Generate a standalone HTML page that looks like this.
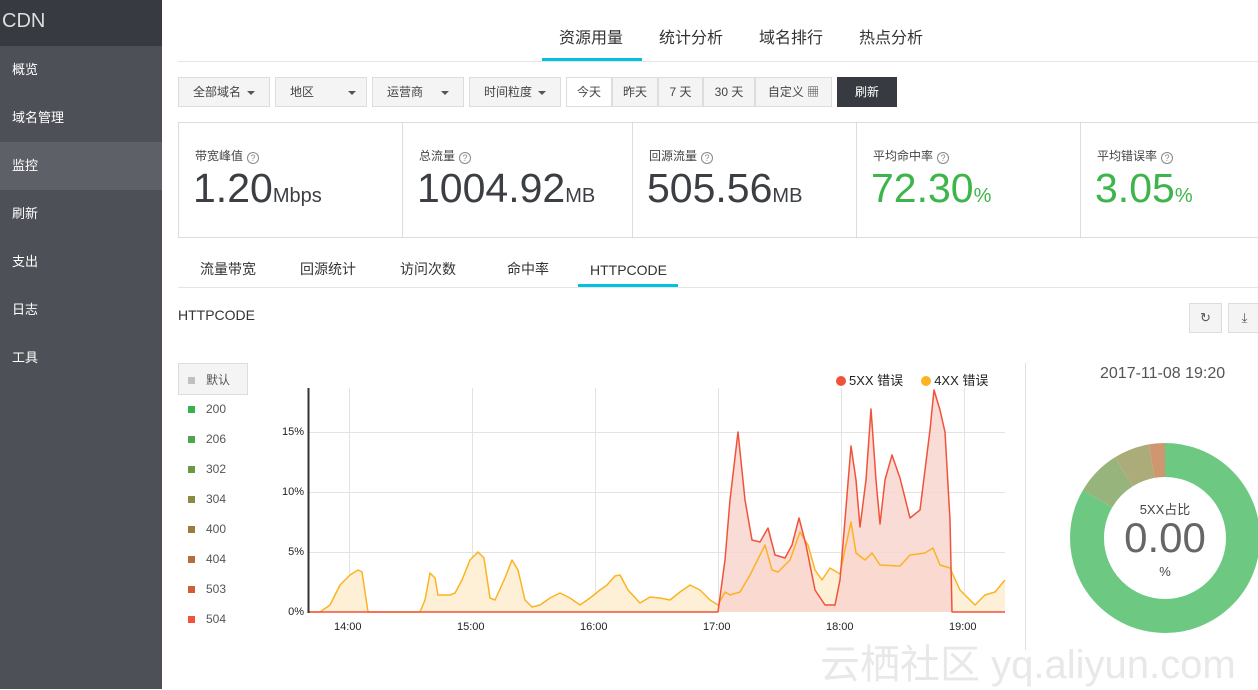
<!DOCTYPE html>
<html><head><meta charset="utf-8"><style>
*{margin:0;padding:0;box-sizing:border-box}
body{width:1258px;height:689px;overflow:hidden;background:#fff;font-family:"Liberation Sans","Noto Sans CJK SC",sans-serif;color:#333;position:relative}
.abs{position:absolute}
.side{left:0;top:0;width:162px;height:689px;background:#4d5056}
.side .hd{height:46px;background:#373a40;color:#ddd;font-size:20px;line-height:42px;padding-left:2px}
.side .it{height:48px;line-height:48px;color:#fff;font-size:13px;padding-left:12px}
.side .sel{background:#5d6066}
.tab{font-size:16px;color:#333;top:24px}
.btn{top:77px;height:30px;border:1px solid #ddd;background:#f4f4f4;font-size:12px;color:#444;line-height:28px;text-align:center}
.car{display:inline-block;border-left:4px solid transparent;border-right:4px solid transparent;border-top:4px solid #555;vertical-align:middle;margin-left:6px}
.card{top:122px;height:116px;border:1px solid #ddd;border-left:none}
.card .l{position:absolute;left:16px;top:24px;font-size:12px;color:#444}
.card .v{position:absolute;left:14px;top:42px;font-size:41px;color:#3b3e43}
.card .v small{font-size:20px}
.q{display:inline-block;width:12px;height:12px;border:1px solid #888;border-radius:50%;font-size:9px;line-height:10px;text-align:center;color:#888;margin-left:4px;vertical-align:-1px}
.st{top:259px;font-size:14px;color:#333;line-height:20px}
.lg{left:188px;font-size:12px;color:#555}
.lg i{display:inline-block;width:7px;height:7px;margin-right:11px}
.yl{font-size:11px;color:#222;text-align:right;width:30px;left:274px}
.xl{font-size:11px;color:#222;top:621px}
</style></head><body>
<div class="abs side"><div class="hd">CDN</div>
<div class="it">概览</div><div class="it">域名管理</div><div class="it sel">监控</div><div class="it">刷新</div><div class="it">支出</div><div class="it">日志</div><div class="it">工具</div></div>

<div class="abs tab" style="left:559px">资源用量</div>
<div class="abs tab" style="left:659px">统计分析</div>
<div class="abs tab" style="left:759px">域名排行</div>
<div class="abs tab" style="left:859px">热点分析</div>
<div class="abs" style="left:178px;top:61px;width:1080px;height:1px;background:#e5e5e5"></div>
<div class="abs" style="left:542px;top:58px;width:100px;height:3px;background:#00c1de"></div>

<div class="abs btn" style="left:178px;width:92px">全部域名<span class="car"></span></div>
<div class="abs btn" style="left:275px;width:92px;text-align:left;padding-left:14px">地区<span class="car" style="margin-left:34px"></span></div>
<div class="abs btn" style="left:372px;width:92px">运营商<span class="car" style="margin-left:18px"></span></div>
<div class="abs btn" style="left:469px;width:92px">时间粒度<span class="car"></span></div>
<div class="abs btn" style="left:566px;width:46px;background:#fff">今天</div>
<div class="abs btn" style="left:612px;width:46px">昨天</div>
<div class="abs btn" style="left:658px;width:45px">7 天</div>
<div class="abs btn" style="left:703px;width:52px">30 天</div>
<div class="abs btn" style="left:755px;width:77px">自定义 ▦</div>
<div class="abs btn" style="left:837px;width:60px;background:#373a40;border-color:#373a40;color:#fff">刷新</div>

<div class="abs card" style="left:178px;width:225px;border-left:1px solid #ddd"><div class="l">带宽峰值<span class="q">?</span></div><div class="v">1.20<small>Mbps</small></div></div>
<div class="abs card" style="left:403px;width:230px"><div class="l">总流量<span class="q">?</span></div><div class="v">1004.92<small>MB</small></div></div>
<div class="abs card" style="left:633px;width:224px"><div class="l">回源流量<span class="q">?</span></div><div class="v">505.56<small>MB</small></div></div>
<div class="abs card" style="left:857px;width:224px"><div class="l">平均命中率<span class="q">?</span></div><div class="v" style="color:#3db54a">72.30<small>%</small></div></div>
<div class="abs card" style="left:1081px;width:180px"><div class="l">平均错误率<span class="q">?</span></div><div class="v" style="color:#3db54a">3.05<small>%</small></div></div>

<div class="abs st" style="left:200px">流量带宽</div>
<div class="abs st" style="left:300px">回源统计</div>
<div class="abs st" style="left:400px">访问次数</div>
<div class="abs st" style="left:507px">命中率</div>
<div class="abs st" style="left:590px;top:260px">HTTPCODE</div>
<div class="abs" style="left:178px;top:287px;width:1080px;height:1px;background:#e5e5e5"></div>
<div class="abs" style="left:578px;top:284px;width:100px;height:3px;background:#00c1de"></div>
<div class="abs" style="left:178px;top:307px;font-size:14px;color:#333">HTTPCODE</div>
<div class="abs" style="left:1189px;top:303px;width:33px;height:30px;border:1px solid #ddd;background:#f4f4f4;font-size:13px;text-align:center;line-height:28px;color:#555">↻</div>
<div class="abs" style="left:1228px;top:303px;width:33px;height:30px;border:1px solid #ddd;background:#f4f4f4;font-size:13px;text-align:center;line-height:28px;color:#555">⤓</div>

<div class="abs" style="left:178px;top:363px;width:70px;height:32px;border:1px solid #ddd;background:#f4f4f4"></div>
<div class="abs lg" style="top:371px"><i style="background:#c0c0c0"></i>默认</div>
<div class="abs lg" style="top:402px"><i style="background:#35b34a"></i>200</div>
<div class="abs lg" style="top:432px"><i style="background:#4ba84a"></i>206</div>
<div class="abs lg" style="top:462px"><i style="background:#6a9a40"></i>302</div>
<div class="abs lg" style="top:492px"><i style="background:#888b40"></i>304</div>
<div class="abs lg" style="top:522px"><i style="background:#9c7b3e"></i>400</div>
<div class="abs lg" style="top:552px"><i style="background:#b66c3c"></i>404</div>
<div class="abs lg" style="top:582px"><i style="background:#d25c37"></i>503</div>
<div class="abs lg" style="top:612px"><i style="background:#f0533a"></i>504</div>

<div class="abs yl" style="top:426px">15%</div>
<div class="abs yl" style="top:486px">10%</div>
<div class="abs yl" style="top:546px">5%</div>
<div class="abs yl" style="top:606px">0%</div>
<div class="abs xl" style="left:334px">14:00</div>
<div class="abs xl" style="left:457px">15:00</div>
<div class="abs xl" style="left:580px">16:00</div>
<div class="abs xl" style="left:703px">17:00</div>
<div class="abs xl" style="left:826px">18:00</div>
<div class="abs xl" style="left:949px">19:00</div>
<div class="abs" style="left:836px;top:370px;font-size:13px;color:#222;white-space:nowrap"><span style="display:inline-block;width:10px;height:10px;border-radius:50%;background:#f0533a;margin-right:3px;vertical-align:-1px"></span>5XX 错误<span style="display:inline-block;width:10px;height:10px;border-radius:50%;background:#fbb321;margin:0 3px 0 18px;vertical-align:-1px"></span>4XX 错误</div>

<svg class="abs" style="left:0;top:0" width="1258" height="689">
<g stroke="#e3e3e3" stroke-width="1">
<line x1="308" y1="432.5" x2="1005" y2="432.5"/><line x1="308" y1="492.5" x2="1005" y2="492.5"/><line x1="308" y1="552.5" x2="1005" y2="552.5"/>
<line x1="349.5" y1="388" x2="349.5" y2="612"/><line x1="472.5" y1="388" x2="472.5" y2="612"/><line x1="595.5" y1="388" x2="595.5" y2="612"/><line x1="718.5" y1="388" x2="718.5" y2="612"/><line x1="841.5" y1="388" x2="841.5" y2="612"/><line x1="964.5" y1="388" x2="964.5" y2="612"/>
</g>
<polygon fill="#fdf0d6" stroke="none" points="308,612 320,612 330,605 340,585 350,575 358,570 362,572 368,612 420,612 425,600 430,573 435,578 438,595 450,595 455,593 462,580 470,560 478,552 484,558 490,598 495,600 505,578 512,560 518,570 525,600 532,607 540,605 550,598 560,593 570,598 580,605 590,598 600,590 607,585 615,576 620,575 628,590 640,603 650,597 660,598 670,600 680,592 690,585 700,590 710,600 718,605 725,592 730,595 740,592 750,575 765,545 772,570 778,572 790,560 800,532 808,545 815,570 822,580 830,568 840,574 846,545 851,522 856,553 865,560 872,553 880,565 900,566 910,555 925,553 933,548 940,565 950,568 960,590 975,605 985,595 995,592 1005,580 1005,612"/>
<polygon fill="#f9d6cf" fill-opacity="0.85" stroke="none" points="718,612 725,560 730,500 738,432 745,500 752,540 760,542 768,528 775,555 785,558 792,545 799,518 806,545 815,590 825,605 835,605 840,580 845,520 851,446 856,480 860,527 866,480 871,409 876,480 880,524 885,480 892,455 900,478 910,518 920,510 930,430 934,390 940,410 945,432 950,520 952,612"/>
<polyline fill="none" stroke="#fbb321" stroke-width="1.5" stroke-linejoin="round" points="308,612 320,612 330,605 340,585 350,575 358,570 362,572 368,612 420,612 425,600 430,573 435,578 438,595 450,595 455,593 462,580 470,560 478,552 484,558 490,598 495,600 505,578 512,560 518,570 525,600 532,607 540,605 550,598 560,593 570,598 580,605 590,598 600,590 607,585 615,576 620,575 628,590 640,603 650,597 660,598 670,600 680,592 690,585 700,590 710,600 718,605 725,592 730,595 740,592 750,575 765,545 772,570 778,572 790,560 800,532 808,545 815,570 822,580 830,568 840,574 846,545 851,522 856,553 865,560 872,553 880,565 900,566 910,555 925,553 933,548 940,565 950,568 960,590 975,605 985,595 995,592 1005,580"/>
<polyline fill="none" stroke="#f0533a" stroke-width="1.5" stroke-linejoin="round" points="308,612 718,612 725,560 730,500 738,432 745,500 752,540 760,542 768,528 775,555 785,558 792,545 799,518 806,545 815,590 825,605 835,605 840,580 845,520 851,446 856,480 860,527 866,480 871,409 876,480 880,524 885,480 892,455 900,478 910,518 920,510 930,430 934,390 940,410 945,432 950,520 952,612 1005,612"/>
<line x1="308.5" y1="388" x2="308.5" y2="613" stroke="#333" stroke-width="2"/>
<line x1="1025.5" y1="363" x2="1025.5" y2="650" stroke="#e0e0e0"/>
<g transform="rotate(-90 1165 538)" fill="none" stroke-width="34">
<circle cx="1165" cy="538" r="78" stroke="#6dc982" stroke-dasharray="408.4 490.1"/>
<circle cx="1165" cy="538" r="78" stroke="#97b47c" stroke-dasharray="0 408.4 38.1 500"/>
<circle cx="1165" cy="538" r="78" stroke="#abac7a" stroke-dasharray="0 446.5 29.9 500"/>
<circle cx="1165" cy="538" r="78" stroke="#cf9770" stroke-dasharray="0 476.4 13.7 500"/>
</g>
</svg>
<div class="abs" style="left:1100px;top:365px;font-size:16px;color:#555">2017-11-08 19:20</div>
<div class="abs" style="left:1115px;top:499px;width:100px;text-align:center;font-size:13px;color:#444">5XX占比</div>
<div class="abs" style="left:1105px;top:514px;width:120px;text-align:center;font-size:42px;color:#666">0.00</div>
<div class="abs" style="left:1115px;top:564px;width:100px;text-align:center;font-size:13px;color:#444">%</div>
<div class="abs" style="left:820px;top:632px;font-size:40px;color:rgba(210,210,210,0.5)">云栖社区 yq.aliyun.com</div>
</body></html>
